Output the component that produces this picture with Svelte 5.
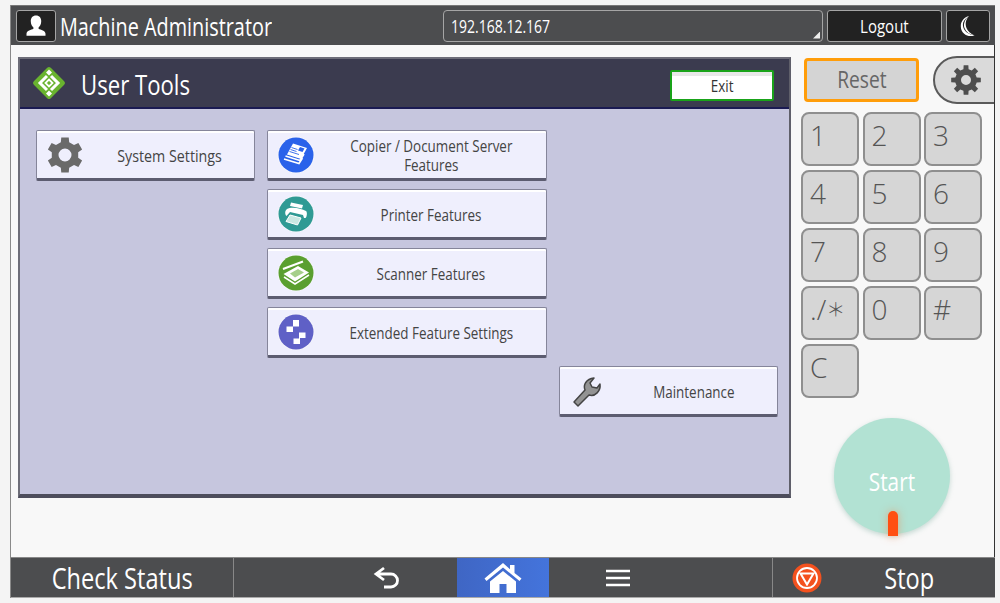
<script>
  const keys = ['1','2','3','4','5','6','7','8','9','./','0','#','C'];
  function gear(n, R, r, cx, cy, hole) {
    const pts = [];
    const step = (Math.PI * 2) / n;
    for (let i = 0; i < n; i++) {
      const a = -Math.PI / 2 + i * step;
      const w = step * 0.2, v = step * 0.3;
      const p = (rad, t) => `${(cx + rad * Math.cos(t)).toFixed(2)} ${(cy + rad * Math.sin(t)).toFixed(2)}`;
      pts.push(p(r, a - v), p(R, a - w), p(R, a + w), p(r, a + v));
    }
    const d = 'M' + pts.join('L') + 'Z';
    return d + `M${cx - hole} ${cy}a${hole} ${hole} 0 1 0 ${hole * 2} 0a${hole} ${hole} 0 1 0 ${-hole * 2} 0Z`;
  }
</script>

<div class="screen">
  <header class="top">
    <div class="user">
      <svg width="40" height="32" viewBox="0 0 40 32"><path fill="#fff" d="M20 5c3.600 0 5.500 2.500 5.500 6s-1.600 5.300-2.800 6.500v1.300c2.200 1.300 7.300 1.900 7.300 5.400v2H10v-2c0-3.500 5.100-4.100 7.300-5.400v-1.300C16.100 16.300 14.500 14.500 14.500 11s1.900-6 5.500-6z"/></svg>
    </div>
    <span class="name"><span class="sq sq-l">Machine Administrator</span></span>
    <div class="addr"><span class="sq sq-l">192.168.12.167</span><i class="corner"></i></div>
    <div class="logout"><span class="sq sq-l">Logout</span></div>
    <div class="moon">
      <svg width="16" height="22" viewBox="0 0 16 22"><path fill="#fff" d="M9 1C3 5 2 9 3.500 13c1.300 3.500 5 6.500 11 7.500C8 22.500 1 19 .8 11.500.7 6 4.500 2 9 1z"/><path fill="#fff" d="M9 1C5.500 5 5 9 6.500 13c1.200 3 4 6 8 7.500-5-1-8.500-3.500-10-7.500C3 9 5 4 9 1z"/></svg>
    </div>
  </header>

  <div class="middle">
    <section class="panel">
      <div class="title">
        <svg width="36" height="36" viewBox="0 0 36 36" class="logo">
          <rect x="6" y="6" width="24" height="24" rx="2.500" transform="rotate(45 18 18)" fill="#69b32f"/>
          <path d="M18 4.500l3 3-3 3-3-3zM18 25.500l3 3-3 3-3-3z" fill="#fff"/>
          <path d="M16 11 9 18l7 7M20 11l7 7-7 7" fill="none" stroke="#fff" stroke-width="3"/>
          <path d="M18 14.500l3.500 3.500-3.500 3.500-3.500-3.500z" fill="none" stroke="#fff" stroke-width="1.800"/>
        </svg>
        <h1><span class="sq sq-m">User Tools</span></h1>
        <button class="exit"><span class="sq sq-s">Exit</span></button>
      </div>
      <div class="grid">
        <button class="fn c1 r1">
          <svg class="ico" width="38" height="38" viewBox="0 0 38 38"><path fill="#6a6a6a" fill-rule="evenodd" d={gear(6, 18, 13.500, 19, 19, 6.500)}/></svg>
          <span class="sq sq-s lbl wide">System Settings</span>
        </button>

        <button class="fn c2 r1">
          <svg class="ico" width="38" height="38" viewBox="0 0 38 38">
            <circle cx="19" cy="19" r="18.500" fill="#f5f5fb"/><circle cx="19" cy="19" r="17.500" fill="#2a62ea"/>
            <path d="M16 7.500l14 4.500-6 11-14-4.500z" fill="#fff"/>
            <path d="M23 11l4.500 1.400-2 3.600-4.500-1.400z" fill="#2a62ea"/>
            <path d="M14.500 11.500l6 2M13.500 13.500l6 2M12.500 15.500l9.500 3" stroke="#2a62ea" stroke-width=".9"/>
            <path d="M8.500 20l14.500 4.500 4-6.500M7 23l15 4.500 3.500-5.500" stroke="#fff" stroke-width="1.600" fill="none"/>
          </svg>
          <span class="sq sq-s lbl two">Copier / Document Server<br/>Features</span>
        </button>

        <button class="fn c2 r2">
          <svg class="ico" width="38" height="38" viewBox="0 0 38 38">
            <circle cx="19" cy="19" r="18.500" fill="#f5f5fb"/><circle cx="19" cy="19" r="17.500" fill="#2f9a94"/>
            <path d="M14 7.500l12 2.500-1 3.500-12-2.500z" fill="#fff"/>
            <path d="M10 14c4-2.500 14-1 19 2 1.500 1 1 6-.5 7H27l-1-3-13-3-3.500 4c-2-2-1.500-5.500.5-7z" fill="#fff"/>
            <path d="M13 20l11 3-3.500 7-11.500-3.500z" fill="#c9e8e2" stroke="#fff" stroke-width="1"/>
          </svg>
          <span class="sq sq-s lbl">Printer Features</span>
        </button>

        <button class="fn c2 r3">
          <svg class="ico" width="38" height="38" viewBox="0 0 38 38">
            <circle cx="19" cy="19" r="18.500" fill="#f5f5fb"/><circle cx="19" cy="19" r="17.500" fill="#5a9f2f"/>
            <path d="M6 15 26 7.500" stroke="#fff" stroke-width="2"/>
            <path d="M6.500 20 21 12l11 6.500-14 9z" fill="#fff"/>
            <path d="M13 19.500 21 15l6 3.500-9 5z" fill="#a6cf8a"/>
            <path d="M7 23l11 7 14-9" stroke="#fff" stroke-width="1.500" fill="none"/>
          </svg>
          <span class="sq sq-s lbl">Scanner Features</span>
        </button>

        <button class="fn c2 r4">
          <svg class="ico" width="38" height="38" viewBox="0 0 38 38">
            <circle cx="19" cy="19" r="18.500" fill="#f5f5fb"/><circle cx="19" cy="19" r="17.500" fill="#5f60c6"/>
            <path d="M16 7h6v6.500h-6V19H9.500v-5.500H16zM22 19.500h6.500V25H23v6h-6.500v-5.500H22z" fill="#fff"/>
          </svg>
          <span class="sq sq-s lbl">Extended Feature Settings</span>
        </button>

        <button class="fn c3 r5">
          <svg class="ico" width="34" height="34" viewBox="0 0 34 34">
            <path d="M4 28 15 16c-2-5 1-11 9-12l-4 5 2 4 5 1 3-4c1 7-5 13-11 11L8 32z" fill="#939393" stroke="#444" stroke-width="1.500" stroke-linejoin="round"/>
          </svg>
          <span class="sq sq-s lbl">Maintenance</span>
        </button>
      </div>
    </section>

    <aside class="side">
      <div class="side-top">
        <button class="reset"><span class="sq sq-m">Reset</span></button>
        <button class="pill">
          <svg width="32" height="32" viewBox="0 0 32 32"><path fill="#4e4e4e" fill-rule="evenodd" d={gear(8, 15, 11, 16, 16, 5)}/></svg>
        </button>
      </div>
      <div class="keys">
        {#each keys as k}
          <button class="key"><span>{k}{#if k === './'}<b class="ast">＊</b>{/if}</span></button>
        {/each}
      </div>
      <div class="start">
        <span class="sq sq-m">Start</span>
        <i class="led"></i>
      </div>
    </aside>
  </div>

  <footer class="bottom">
    <div class="check"><span class="sq sq-xl">Check Status</span></div>
    <div class="nav back">
      <svg width="32" height="26" viewBox="0 0 32 26"><path d="M12 3 4 9l8 6M4 9h15a6.500 6.500 0 0 1 0 13h-7" fill="none" stroke="#fff" stroke-width="2.800"/></svg>
    </div>
    <div class="home">
      <svg width="40" height="34" viewBox="0 0 40 34"><path fill="#fff" d="M20 2 1.500 17.500l2 2.500L20 6.500 36.500 20l2-2.500L31.500 12V4h-4.500v4.200zM20 10 7 20.500V32h9.500v-9h7v9H33V20.500z"/></svg>
    </div>
    <div class="nav menu">
      <svg width="24" height="20" viewBox="0 0 24 20"><path d="M0 3h24M0 10h24M0 17h24" stroke="#fff" stroke-width="2.600"/></svg>
    </div>
    <div class="stop">
      <svg width="30" height="30" viewBox="0 0 30 30"><circle cx="15" cy="15" r="14.500" fill="#f4511e"/><circle cx="15" cy="15" r="10" fill="none" stroke="#fff" stroke-width="1.800"/><path d="M8.500 10.500h13L15 21.500z" fill="none" stroke="#fff" stroke-width="2"/></svg>
      <span class="stoptxt"><span class="sq sq-xl">Stop</span></span>
    </div>
  </footer>
</div>

<style>
  :global(body) { margin: 0; background: #f4f4f4; }
  * { box-sizing: border-box; }
  button { font: inherit; padding: 0; margin: 0; }
  .screen {
    width: 985px; height: 593px; margin: 5px 0 0 10px;
    display: flex; flex-direction: column;
    font-family: "Open Sans", sans-serif; background: #f8f8f8; overflow: hidden;
    border-left: 1px solid #8a8a8a;
  }
  .sq { display: inline-block; transform: scaleX(.8); white-space: nowrap; }
  .sq-s { font-size: 16.800px; }
  .sq-m { font-size: 23px; }
  .sq-l { font-size: 24.800px; }
  .sq-xl { font-size: 29.500px; }

  .top {
    height: 40px; flex: none; background: #4c4d4f; display: flex; align-items: center;
    padding: 0 4px 0 5px; color: #fff; border-top: 1px solid #777;
  }
  .user {
    width: 40px; height: 32px; background: #222; border: 1px solid #a5a5a5; border-radius: 3px;
    display: flex; align-items: center; justify-content: center; flex: none;
  }
  .name { width: 387px; padding-left: 4px; flex: none; }
  .name .sq { transform-origin: left center; }
  .addr {
    width: 380px; height: 32px; border: 1px solid #a5a5a5; border-radius: 4px; position: relative;
    display: flex; align-items: center; padding-left: 7px; flex: none;
  }
  .addr .sq { font-size: 17.500px; transform-origin: left center; }
  .corner {
    position: absolute; right: 2px; bottom: 2px; width: 7px; height: 7px; background: #eee;
    clip-path: polygon(100% 0, 100% 100%, 0 100%);
  }
  .logout, .moon {
    height: 32px; background: #222; border: 1px solid #a5a5a5; border-radius: 3px;
    display: flex; align-items: center; justify-content: center; flex: none;
  }
  .logout { width: 115px; margin-left: 4px; }
  .logout .sq { font-size: 18.800px; }
  .moon { width: 44px; margin-left: 4px; }

  .middle { flex: 1; min-height: 0; display: flex; border-right: 1px solid #333; }
  .panel {
    width: 773px; height: 441px; margin: 12px 0 0 7px; flex: none;
    background: #c6c6de; border: 2px solid #6d6d78; border-bottom-width: 4px; border-bottom-color: #4d4d5c;
    border-right-color: #5f5f6a; display: flex; flex-direction: column;
  }
  .title {
    height: 50px; flex: none; background: #3b3b4f; border-bottom: 2px solid #1a1a52; display: flex;
    align-items: center; padding: 0 15px 0 11px; color: #fff;
  }
  .logo { flex: none; }
  h1 { margin: 0 0 0 14px; font-weight: 400; flex: 1; line-height: 1; }
  h1 .sq { font-size: 27.700px; transform-origin: left center; }
  .exit {
    width: 104px; height: 31px; margin-top: 4px; background: linear-gradient(#e8e8e8 0 4px, #fff 4px); border: 2px solid #19a319; border-radius: 2px;
    color: #333; display: flex; align-items: center; justify-content: center;
  }
  .grid {
    padding: 21px 0 0 16px; display: grid; grid-template-columns: 219px 280px 219px;
    grid-auto-rows: 51px; column-gap: 12px; row-gap: 8px;
  }
  .fn {
    position: relative; background: #efeffd; border: 1px solid #85859a; border-bottom: 3px solid #5c5c70; border-radius: 2px;
    box-shadow: inset 0 2px 0 #fff; color: #333; display: flex; align-items: center; justify-content: center; padding-top: 1px;
  }
  .c1 { grid-column: 1; } .c2 { grid-column: 2; } .c3 { grid-column: 3; }
  .r1 { grid-row: 1; } .r2 { grid-row: 2; } .r3 { grid-row: 3; } .r4 { grid-row: 4; } .r5 { grid-row: 5; }
  .ico { position: absolute; left: 9px; top: 5px; }
  .c3 .ico { left: 10px; top: 7px; }
  .lbl { text-align: center; margin-left: 48px; line-height: 19px; color: #444; }
  .wide { transform: scaleX(.85); }
  .c3 .lbl { margin-left: 50px; }

  .side { flex: 1; min-width: 0; position: relative; overflow: hidden; }
  .side-top { display: flex; align-items: center; margin: 11px 0 0 13px; height: 48px; }
  .reset {
    width: 115px; height: 44px; background: #d4d4d4; border: 3px solid #ff9d0a; border-radius: 4px; color: #666;
    display: flex; align-items: center; justify-content: center; flex: none; padding-bottom: 4px;
  }
  .reset .sq { font-size: 24px; }
  .pill {
    margin-left: 14px; width: 80px; height: 48px; flex: none; background: #dadada; border: 2.500px solid #5a5a5a; border-radius: 24px 0 0 24px;
    display: flex; align-items: center; padding-left: 15px;
  }
  .keys {
    margin: 8px 0 0 10px; display: grid; grid-template-columns: repeat(3, 58px); grid-auto-rows: 54px; column-gap: 3.500px; row-gap: 4px;
  }
  .key {
    background: #d6d6d6; border: 2px solid #8f8f8f; border-radius: 8px; color: #555; text-align: left;
    display: flex; padding: 2px 0 0 7px; font-size: 28px; line-height: 38px; font-weight: 300;
  }
  .ast { font: 300 19px/38px "Noto Sans CJK JP", sans-serif; display: inline-block; vertical-align: top; }
  .start {
    position: relative; width: 116px; height: 116px; border-radius: 50%; margin: 20px 0 0 43px; background: #b2e2d3; color: #fff;
    display: flex; align-items: center; justify-content: center; box-shadow: 0 2px 5px rgba(120,170,155,.4); padding-top: 10px;
  }
  .start .sq { font-size: 26px; }
  .led {
    position: absolute; left: 54px; bottom: -2px; width: 10px; height: 25px; background: #ff4f12; border-radius: 5px 5px 0 0;
    box-shadow: 0 0 8px rgba(255,120,60,.5);
  }

  .bottom { height: 41px; flex: none; background: #4c4d4f; display: flex; color: #fff; align-items: stretch; border-top: 1px solid #888; border-bottom: 1px solid #aaa; }
  .check { width: 223px; flex: none; border-right: 1px solid #888; display: flex; align-items: center; justify-content: center; }
  .nav { width: 223px; flex: none; display: flex; align-items: center; }
  .back { justify-content: flex-end; padding-right: 53px; }
  .menu { justify-content: flex-start; padding-left: 57px; }
  .home { width: 92px; flex: none; background: linear-gradient(90deg, #3f66c4, #4474dc); display: flex; align-items: center; justify-content: center; }
  .stop { flex: 1; min-width: 0; border-left: 1px solid #888; display: flex; align-items: center; padding-left: 19px; }
  .stoptxt { margin-left: 56px; }
</style>
